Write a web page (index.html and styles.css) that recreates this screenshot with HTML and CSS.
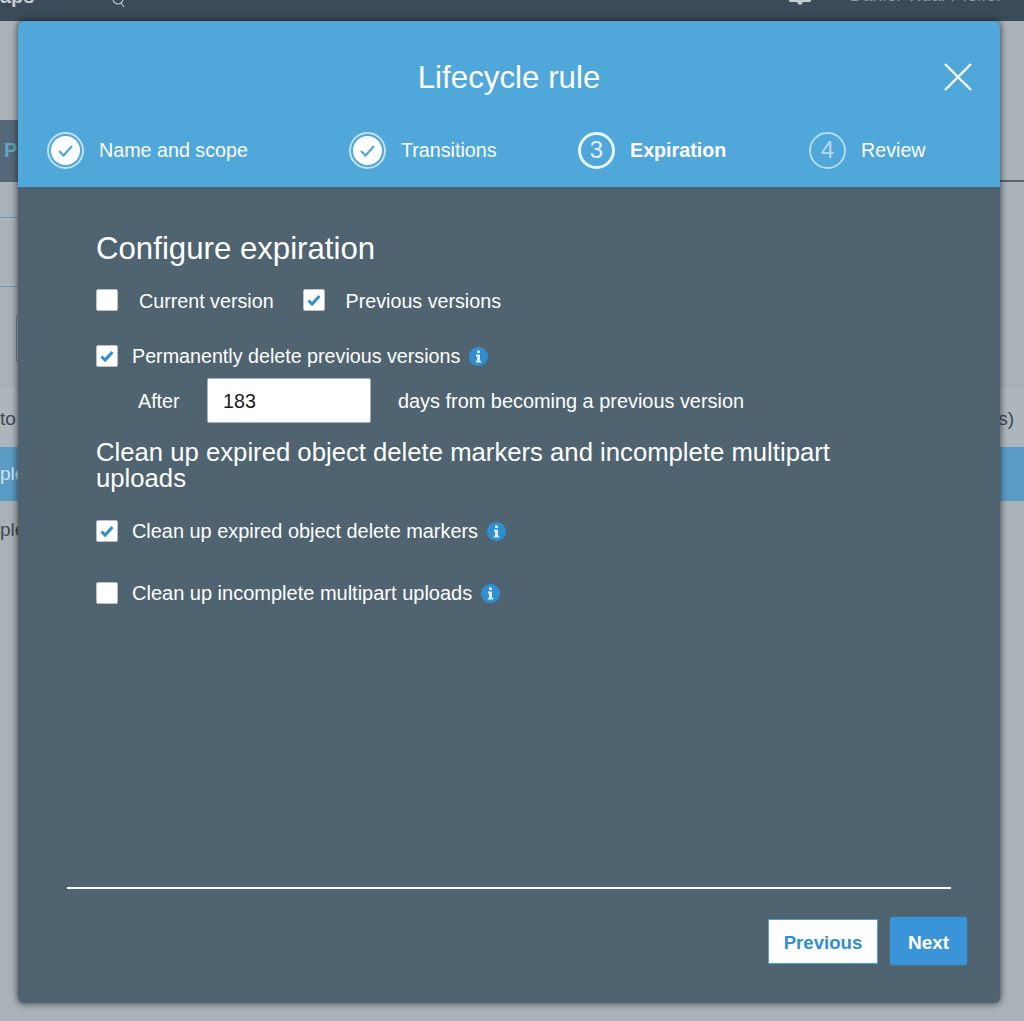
FILE: index.html
```html
<!DOCTYPE html>
<html lang="en">
<head>
<meta charset="utf-8">
<title>Lifecycle rule</title>
<link rel="stylesheet" href="styles.css">
</head>
<body>
<div class="page">
  <header class="topbar">
    <span class="brand">aps</span>
    <svg class="search" width="16" height="16" viewBox="0 0 16 16"><circle cx="7" cy="3" r="5" fill="none" stroke="#b9c2c9" stroke-width="1.2"/><path d="M10 7l3 4" stroke="#b9c2c9" stroke-width="1.2"/></svg>
    <svg class="bell" width="24" height="8" viewBox="0 0 24 8"><path d="M1 0h22v3q0 1-2 1h-6q-1 3-3 3t-3-3H3Q1 4 1 3z" fill="#c5ccd2"/></svg>
    <span class="user">Daniel Vidal Pfeifer</span>
  </header>
  <div class="tabs"><div class="tab">Properties</div></div>
  <div class="rule r1"></div>
  <div class="rule r2"></div>
  <div class="filter"></div>
  <div class="search-block"><div class="filter-box"></div></div>
  <div class="thead"><span>to</span><span>s)</span></div>
  <div class="trow selected"><span>ple</span></div>
  <div class="trow"><span>ple</span></div>
</div>

<section class="modal">
  <div class="modal-head">
    <h1 class="modal-title">Lifecycle rule</h1>
    <svg class="close" width="30" height="30" viewBox="0 0 30 30"><path d="M2 2l26 26M28 2L2 28" stroke="#fff" stroke-width="2.4" fill="none"/></svg>
    <ol class="steps">
      <li class="step">
        <span class="disc done"><svg width="21" height="21" viewBox="0 0 21 21"><path d="M4 11l4.5 4.5L17 6" stroke="#5aa9d9" stroke-width="2.4" fill="none"/></svg></span>
        Name and scope
      </li>
      <li class="step">
        <span class="disc done"><svg width="21" height="21" viewBox="0 0 21 21"><path d="M4 11l4.5 4.5L17 6" stroke="#5aa9d9" stroke-width="2.4" fill="none"/></svg></span>
        Transitions
      </li>
      <li class="step current"><span class="disc num">3</span>Expiration</li>
      <li class="step"><span class="disc num todo">4</span>Review</li>
    </ol>
  </div>
  <div class="modal-body">
    <div class="content">
      <h2 class="h-main">Configure expiration</h2>
      <div class="row row-versions">
        <span class="box"></span><span class="lbl lbl-wide">Current version</span>
        <span class="box on"><svg width="22" height="22" viewBox="0 0 22 22"><path d="M5.5 11.5l3.6 3.6 7.4-8" stroke="#2f8fd0" stroke-width="3" fill="none"/></svg></span><span class="lbl lbl-wide">Previous versions</span>
      </div>
      <div class="row row-perm">
        <span class="box on"><svg width="22" height="22" viewBox="0 0 22 22"><path d="M5.5 11.5l3.6 3.6 7.4-8" stroke="#2f8fd0" stroke-width="3" fill="none"/></svg></span><span class="lbl">Permanently delete previous versions</span>
        <svg class="info" width="19" height="19" viewBox="0 0 19 19"><circle cx="9.5" cy="9.5" r="9.5" fill="#2f8fd0"/><path d="M8 3.5h3v2.6H8zM7 7.6h4v6.2h1.2v1.8H6.8v-1.8H8V9.4H7z" fill="#dcebf5"/></svg>
      </div>
      <div class="row row-after">
        <span class="after">After</span>
        <span class="input">183</span>
        <span class="days">days from becoming a previous version</span>
      </div>
      <h3 class="h-sub">Clean up expired object delete markers and incomplete multipart uploads</h3>
      <div class="row row-exp">
        <span class="box on"><svg width="22" height="22" viewBox="0 0 22 22"><path d="M5.5 11.5l3.6 3.6 7.4-8" stroke="#2f8fd0" stroke-width="3" fill="none"/></svg></span><span class="lbl">Clean up expired object delete markers</span>
        <svg class="info" width="19" height="19" viewBox="0 0 19 19"><circle cx="9.5" cy="9.5" r="9.5" fill="#2f8fd0"/><path d="M8 3.5h3v2.6H8zM7 7.6h4v6.2h1.2v1.8H6.8v-1.8H8V9.4H7z" fill="#dcebf5"/></svg>
      </div>
      <div class="row row-inc">
        <span class="box"></span><span class="lbl">Clean up incomplete multipart uploads</span>
        <svg class="info" width="19" height="19" viewBox="0 0 19 19"><circle cx="9.5" cy="9.5" r="9.5" fill="#2f8fd0"/><path d="M8 3.5h3v2.6H8zM7 7.6h4v6.2h1.2v1.8H6.8v-1.8H8V9.4H7z" fill="#dcebf5"/></svg>
      </div>
    </div>
    <footer class="foot">
      <div class="divider"></div>
      <div class="actions">
        <button class="btn btn-prev" type="button">Previous</button>
        <button class="btn btn-next" type="button">Next</button>
      </div>
    </footer>
  </div>
</section>
</body>
</html>
```
FILE: styles.css
```css
* { box-sizing: border-box; }
html, body { margin: 0; height: 100%; }
body {
  background: #a8b2b8;
  font-family: "Liberation Sans", Arial, sans-serif;
  color: #fff;
  overflow: hidden;
}
.page { height: 1021px; }
.topbar {
  height: 21px;
  background: #3b4b59;
  display: flex;
  align-items: flex-start;
  overflow: hidden;
  color: #c5ccd2;
}
.brand { font-size: 20px; font-weight: 700; line-height: 20px; margin: -14px 0 0 0; }
.search { margin: -4px 0 0 77px; }
.bell { margin: -2px 0 0 661px; }
.user { font-size: 18px; line-height: 20px; margin: -15px 0 0 37px; color: #8a96a0; white-space: nowrap; }
.tabs { margin-top: 99px; height: 60px; }
.tab {
  width: 200px; height: 60px;
  background: #56697a;
  color: #62a6bf;
  font-size: 20px; font-weight: 700; line-height: 60px;
  padding-left: 4px;
}
.rule { height: 1px; background: #6f95b5; width: 500px; }
.r1 { background: #55646f; height: 2px; width: 100%; }
.r2 { margin-top: 35px; }
.filter { height: 69px; border-bottom: 1px solid #6f95b5; width: 500px; }
.search-block { height: 101px; padding: 28px 0 0 16px; }
.filter-box { width: 200px; height: 46px; border: 1px solid #6f8aa0; }
.thead {
  height: 59px;
  display: flex; justify-content: space-between; align-items: center;
  font-size: 19px; color: #3d4a55;
  background: #acb6bb;
  padding: 2px 10px 0 0;
}
.trow { height: 54px; display: flex; align-items: center; font-size: 19px; color: #3d4a55; }
.selected { background: #5a9bc4; color: #cfe3f0; }
.trow + .trow { height: 58px; }

.modal {
  position: absolute;
  left: 18px; top: 21px;
  width: 982px; height: 982px;
  border-radius: 6px;
  overflow: hidden;
  box-shadow: 0 0 6px 1px rgba(0, 0, 0, .55);
  display: flex; flex-direction: column;
  background: #4f6470;
}
.modal-head {
  position: relative;
  height: 166px;
  background: #50a7da;
  padding-top: 36px;
  flex: none;
}
.modal-title {
  margin: 0;
  text-align: center;
  font-weight: 400;
  font-size: 31.3px;
  line-height: 41px;
}
.close { position: absolute; right: 27px; top: 41px; }
.steps {
  list-style: none;
  margin: 33px 0 0;
  padding: 0 0 0 29px;
  display: grid;
  grid-template-columns: 302px 229px 231px auto;
  font-size: 19.7px;
}
.step { display: flex; align-items: center; height: 38px; }
.current { font-weight: 700; }
.disc {
  width: 37px; height: 37px;
  border-radius: 50%;
  display: flex; align-items: center; justify-content: center;
  margin-right: 15px;
  flex: none;
}
.done { background: #fff; background-clip: content-box; padding: 2px; border: 2px solid #bfe0f3; }
.done svg { display: block; }
.num { border: 3px solid #e8f4fb; font-size: 24px; font-weight: 400; color: #e3f1fa; }
.todo { border: 2px solid #b4daf0; color: #b4daf0; }

.modal-body { flex: 1; display: flex; flex-direction: column; }
.content { padding: 45px 0 0 78px; width: 830px; }
.h-main { margin: 0; font-weight: 400; font-size: 31.2px; line-height: 34px; }
.row { display: flex; align-items: center; font-size: 19.7px; }
.row-versions { margin-top: 23px; height: 22px; }
.row-versions .lbl { padding-top: 2px; }
.row-perm { margin-top: 34px; height: 22px; }
.row-after { margin: 11px 0 0 42px; height: 45px; }
.after, .days { padding-top: 2px; }
.row-exp { margin-top: 29px; height: 22px; font-size: 19.9px; }
.row-inc { margin-top: 40px; height: 22px; font-size: 20px; }
.box {
  width: 22px; height: 22px; flex: none;
  background: #fff;
  border: 1px solid #b7c0c6;
  border-radius: 2px;
  position: relative;
}
.box svg { position: absolute; left: -1px; top: -1px; }
.lbl { margin-left: 14px; }
.lbl-wide { margin: 0 29px 0 21px; }
.info { margin-left: 9px; flex: none; }
.after { width: 69px; }
.input {
  width: 164px; height: 45px;
  background: #fff;
  border: 1px solid #a8b2b8;
  border-radius: 2px;
  color: #16191f;
  line-height: 43px;
  padding: 1px 0 0 15px;
}
.days { margin-left: 27px; font-size: 19.9px; }
.h-sub { margin: 16px 0 0; font-weight: 400; font-size: 25.7px; line-height: 26px; }
.foot { margin-top: auto; padding: 0 49px 38px; }
.divider { height: 2px; background: #fff; }
.actions {
  padding: 28px 0 0;
  margin-right: -16px;
  display: flex; justify-content: flex-end; align-items: center;
  gap: 12px;
}
.btn {
  font-family: inherit;
  font-weight: 700;
  border-radius: 0;
  padding: 3px 0 0;
}
.btn-prev {
  width: 110px; height: 45px;
  font-size: 18.6px;
  background: #fff; color: #2f8fd0;
  border: 1px solid #4ba3d8;
}
.btn-next {
  width: 77px; height: 48px;
  font-size: 19px;
  background: #3a95d8; color: #fff;
  border: 0; border-radius: 3px;
  box-shadow: 0 0 2px rgba(80, 170, 230, .5);
}
```
